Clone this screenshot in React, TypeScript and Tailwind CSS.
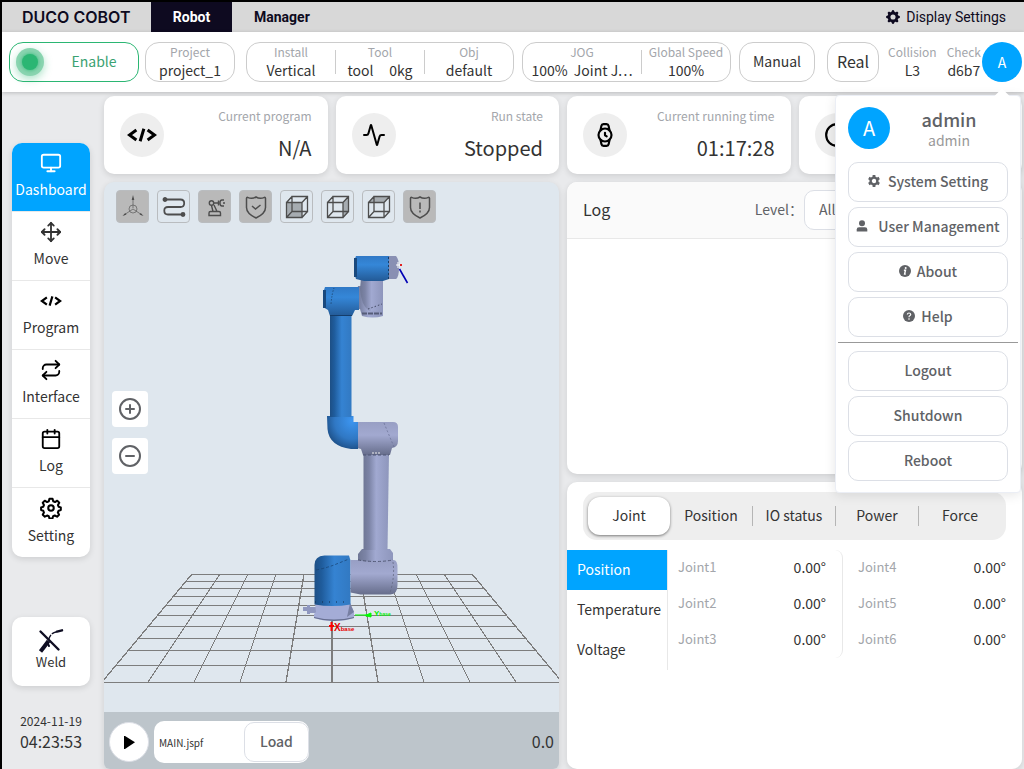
import type { ReactNode } from "react";
import clsx from "clsx";
import {
    Activity,
    Calendar,
    CircleMinus,
    CirclePlus,
    Clock,
    Monitor,
    Move,
    Repeat,
    Watch,
} from "lucide-react";
import { BsFillGearFill } from "react-icons/bs";

const CodeIcon = ({ size = 24 }: { size?: number }) => (
    <svg width={size} height={size} viewBox="0 0 24 24" fill="none" stroke="#000" strokeWidth="2.400">
        <path d="M7.500 8 2 12l5.500 4M16.500 8l5.500 4-5.500 4M13.500 7l-3 10" />
    </svg>
);

const GearIcon = () => (
    <svg width="12" height="12" viewBox="0 0 12 12" fill="none" stroke="#606266">
        <circle cx="6" cy="6" r="3.400" strokeWidth="2.400" />
        <path
            d="M6 0v2M6 10v2M.8 3l1.800 1M9.400 8l1.800 1M.8 9l1.800-1M9.400 4l1.800-1"
            strokeWidth="2.800"
        />
    </svg>
);

const UserIcon = () => (
    <svg width="12" height="12" viewBox="0 0 12 12" fill="#606266">
        <circle cx="6" cy="3.300" r="3" />
        <path d="M.7 11.500V9.400Q.7 7.200 3 7.200h6q2.300 0 2.300 2.200v2.100z" />
    </svg>
);

const InfoIcon = () => (
    <svg width="12" height="12" viewBox="0 0 12 12">
        <circle cx="6" cy="6" r="6" fill="#606266" />
        <circle cx="6.700" cy="3" r="1" fill="#fff" />
        <path d="M4.900 5.200h1.600l-.9 3.900h1.200" fill="none" stroke="#fff" strokeWidth="1.400" />
    </svg>
);

const HelpIcon = () => (
    <svg width="12" height="12" viewBox="0 0 12 12">
        <circle cx="6" cy="6" r="6" fill="#606266" />
        <path d="M4.300 4.500Q4.500 3 6 3t1.700 1.400Q7.700 5.300 6.700 5.800 6 6.200 6 7.200" fill="none" stroke="#fff" strokeWidth="1.200" />
        <circle cx="6" cy="9" r=".8" fill="#fff" />
    </svg>
);

const WeldIcon = () => (
    <svg width="26" height="24" viewBox="0 0 26 24" fill="none" stroke="#0e0d22" strokeLinecap="round">
        <path d="m2.500 2.500 18 18" strokeWidth="2.400" />
        <path d="M18 3Q12.500 4 10.500 11" strokeWidth="1.400" strokeDasharray="4 2.500" />
        <path d="m19 2.600 5-1.300" strokeWidth="2.400" />
        <path d="M10.500 12 6 18l-3.500 4.500" strokeWidth="4" strokeLinecap="butt" />
        <path d="m10 15 1 2" strokeWidth="2" />
    </svg>
);

const CogIcon = () => (
    <svg width="22" height="22" viewBox="0 0 24 24" fill="none" stroke="#000" strokeWidth="2.200" strokeLinejoin="round">
        <circle cx="12" cy="12" r="3" />
        <path d="M10.300 2h3.400l.7 2.700 2 .8L18.800 4l2.200 2.300-1.400 2.500.7 1.800 2.400.7v3l-2.400.7-.8 1.900 1.300 2.400-2.200 2.200-2.500-1.300-1.800.8-.7 2.400h-3.300l-.7-2.400-1.900-.8-2.400 1.300L3 19.300l1.300-2.400-.7-1.900-2.400-.7v-3l2.400-.7.7-1.800L3 6.300 5.200 4l2.500 1.500 1.900-.8z" />
    </svg>
);

/* ---------- view toolbar icons ---------- */

const AxesIcon = () => (
    <svg width="24" height="24" viewBox="0 0 24 24" fill="none" stroke="#5a5a5a" strokeWidth=".7">
        <path d="M12 13V3M12 14 3 20M12 14l9 6" />
        <circle cx="12" cy="14" r="4" />
        <path d="m12 0-1.300 5h2.600zM1.500 21l4-1.500-1.300-1.500zM22.500 21l-4-1.500 1.300-1.500z" fill="#4d4d4d" stroke="none" />
    </svg>
);

const PathIcon = () => (
    <svg width="24" height="24" viewBox="0 0 24 24" fill="none" stroke="#4d4d4d" strokeWidth="1.800">
        <path d="M3 4.500h15.500q3.700 0 3.700 3.700t-3.700 3.800H6q-3.700 0-3.700 3.700T6 19.500h15" />
        <circle cx="3" cy="4.500" r="1.500" fill="#4d4d4d" />
        <circle cx="21" cy="19.500" r="1.500" fill="#4d4d4d" />
    </svg>
);

const ArmIcon = () => (
    <svg width="24" height="24" viewBox="0 0 24 24" fill="none" stroke="#4d4d4d" strokeWidth="1.400">
        <path d="M6 20.500v-2.500q0-1.500 1.500-1.500H16q1.500 0 1.500 1.500v2.500zM8.500 10.500l1.500 6M11 10l3 6.500M10.500 8h5.500" />
        <circle cx="8.500" cy="8" r="2.200" />
        <path d="M15.500 5.500v5M21 5h-2q-2 0-2 3t2 3h2M20 8h2" />
    </svg>
);

const ShieldIcon = ({ children }: { children: ReactNode }) => (
    <svg width="24" height="24" viewBox="0 0 24 24" fill="none" stroke="#4d4d4d" strokeWidth="1.500">
        <path d="M3.500 2.300Q8 4.500 12 2q4 2.500 8.500.3 1 0 1 1v9.200q0 6-9.500 10.500-9.500-4.500-9.500-10.500V3.300q0-1 1-1z" />
        {children}
    </svg>
);

const CubeIcon = ({ face }: { face: string }) => (
    <svg width="24" height="24" viewBox="0 0 24 24" fill="none" stroke="#4d4d4d" strokeWidth="1.300">
        <path d={face} fill="#a6acb1" stroke="none" />
        <path d="M1.500 7.500h15.500v15H1.500zM7 1.500h15.500v15H7zM1.500 7.500 7 1.500M17 7.500l5.500-6M17 22.500l5.500-6M1.500 22.500l5.500-6" />
    </svg>
);

const viewTools = [
    { label: "Axes", filled: true, icon: <AxesIcon /> },
    { label: "Track", filled: false, icon: <PathIcon /> },
    { label: "Robot model", filled: true, icon: <ArmIcon /> },
    { label: "Safety planes", filled: true, icon: <ShieldIcon><path d="m8 11 3.500 3 5-4" /></ShieldIcon> },
    { label: "Front view", filled: false, icon: <CubeIcon face="M1.500 7.500h15.500v15H1.500z" /> },
    { label: "Side view", filled: false, icon: <CubeIcon face="m17 7.500 5.500-6v15l-5.500 6z" /> },
    { label: "Top view", filled: false, icon: <CubeIcon face="M1.500 7.500 7 1.500h15.500l-5.500 6z" /> },
    { label: "Collision", filled: true, icon: <ShieldIcon><path d="M12 7.500v6.500M12 15.500v2" /></ShieldIcon> },
];

const navItems = [
    { label: "Dashboard", icon: <Monitor size={22} /> },
    { label: "Move", icon: <Move size={22} /> },
    { label: "Program", icon: <CodeIcon size={22} /> },
    { label: "Interface", icon: <Repeat size={22} color="#000" /> },
    { label: "Log", icon: <Calendar size={22} color="#000" /> },
    { label: "Setting", icon: <CogIcon /> },
];

const menuItems = [
    { label: "System Setting", icon: <GearIcon />, gap: "gap-2" },
    { label: "User Management", icon: <UserIcon />, gap: "gap-2.5" },
    { label: "About", icon: <InfoIcon />, gap: "gap-1.5" },
    { label: "Help", icon: <HelpIcon />, gap: "gap-1.5" },
];

const sessionItems = ["Logout", "Shutdown", "Reboot"];
const tabs = ["Joint", "Position", "IO status", "Power", "Force"];
const metrics = ["Position", "Temperature", "Voltage"];

const joints = [
    ["Joint1", "Joint2", "Joint3"],
    ["Joint4", "Joint5", "Joint6"],
];

/* Perspective floor: columns meet the near edge every 46 units and the far one every 28 */
const floorColumns = Array.from({ length: 11 }, (_, i) => i - 5);
const floorRows = [574, 581, 588, 596, 605, 615, 626, 638, 650, 665, 682];

const Scene = () => (
    <svg className="absolute inset-0 h-full w-full" viewBox="104 182 455 530" preserveAspectRatio="xMidYMid slice">
        <defs>
            <linearGradient id="blueV">
                <stop offset="0" stopColor="#1d4f85" />
                <stop offset=".2" stopColor="#1f5c9c" />
                <stop offset=".55" stopColor="#3583d2" />
                <stop offset="1" stopColor="#3279c2" />
            </linearGradient>
            <linearGradient id="blueH" x2="0" y2="1">
                <stop offset="0" stopColor="#3079c6" />
                <stop offset=".35" stopColor="#3587d8" />
                <stop offset="1" stopColor="#235a96" />
            </linearGradient>
            <linearGradient id="grayV">
                <stop offset="0" stopColor="#6f7795" />
                <stop offset=".22" stopColor="#7c84a6" />
                <stop offset=".5" stopColor="#a1a9d1" />
                <stop offset="1" stopColor="#8e96bc" />
            </linearGradient>
            <linearGradient id="grayH" x2="0" y2="1">
                <stop offset="0" stopColor="#989fc4" />
                <stop offset=".4" stopColor="#a2a9d0" />
                <stop offset="1" stopColor="#666d8b" />
            </linearGradient>
            <radialGradient id="elbow" cx=".8" cy=".15" r="1">
                <stop offset="0" stopColor="#3c95f0" />
                <stop offset=".55" stopColor="#3078c4" />
                <stop offset="1" stopColor="#174273" />
            </radialGradient>
        </defs>

        <g stroke="#7d7d7d" strokeWidth="1.200" shapeRendering="crispEdges">
            {floorColumns.map((i) => (
                <line key={i} x1={332 + i * 28} y1="574" x2={332 + i * 46} y2="682" />
            ))}
            {floorRows.map((y) => {
                const reach = 140 + ((y - 574) / 108) * 90;
                return <line key={y} x1={332 - reach} y1={y + 0.5} x2={332 + reach} y2={y + 0.5} />;
            })}
        </g>

        {/* base */}
        <path d="M303 607h4v-2h3v2h6v6h-6v1h-3v-3h-4z" fill="#8f97bf" />
        <path d="M315 603h35l4 9v6q-8 3-20 3t-20-3v-4l2-2z" fill="#a4acd6" />
        <path d="m350 603 4 9-7 5z" fill="#777fa3" />
        <path d="M314 617q20 5 40 0v1q-20 6-40 0z" fill="#666e90" />
        <path d="M314.500 565q0-9 10-9.500h24.500l1.500 5v44q-18 3-36 0z" fill="url(#blueV)" />
        <path d="M316 570q10-2 18-5l15-6" fill="none" stroke="#17416f" strokeWidth=".7" strokeDasharray="3 2" />
        <path d="M315 602h35" stroke="#152b47" strokeDasharray="1 6" />

        {/* shoulder and lower link */}
        <path d="M350.500 560h43q4 0 4 8v17q0 9-7 9.500h-30l-10-2z" fill="url(#grayH)" />
        <path d="M393 562q2 15-3 31" fill="none" stroke="#5b617a" strokeDasharray="2 2" strokeWidth=".7" />
        <path d="M362 549h28l3 4v7q-17 4-35 0v-6z" fill="url(#grayV)" />
        <path d="M358 560q18 3 35 0" fill="none" stroke="#434963" strokeWidth=".8" strokeDasharray="3 2" />
        <path d="M363.500 452h25.500l-1.500 98h-24z" fill="url(#grayV)" />

        {/* elbow */}
        <path d="M357 422h36q5 0 5 5v14q0 6-6 7l-2 7h-27l-2-6-4-1z" fill="url(#grayH)" />
        <path d="M384 423q5 12 10 24" fill="none" stroke="#656d90" strokeDasharray="2 2" strokeWidth=".7" />
        <path d="M363 455h26" stroke="#4f5775" strokeDasharray="3 2" />
        <path d="M372 453h8" stroke="#eee" strokeDasharray="2 1" />
        <path d="M327 416h26.500v6h4.500v27h-7Q329 446 327.500 429z" fill="url(#elbow)" />

        {/* upper link */}
        <path d="M330 314h21.500v103H330z" fill="url(#blueV)" />
        <path d="M358 286h25v30q-10 3-21 0l-2-7h-6z" fill="url(#grayV)" />
        <path d="M325 287h34v23h-4l-3 6h-22l-2-6-5-3v-14z" fill="url(#blueH)" />
        <path d="M323 290h3v18h-3z" fill="#1a497d" />
        <path d="M330 315.500h22" stroke="#143a64" strokeWidth=".9" />
        <path d="M334 288q-2 5-3 16" fill="none" stroke="#183a60" strokeDasharray="1 2" />

        {/* wrist */}
        <path d="M361 278h22v33h-14q-8-6-9-22z" fill="url(#grayV)" />
        <path d="m368 309 14-5" stroke="#30364d" strokeWidth=".8" strokeDasharray="1.500 2" />
        <path d="M362 313.500h20" stroke="#565d79" strokeWidth="2" strokeDasharray="5 1" />
        <path d="M389 256h7q3 3 3 12t-3 11h-7z" fill="#8990b3" />
        <path d="M356 256h33v23l-6 2h-19l-8-2q-2-5-2-12t2-11z" fill="url(#blueH)" />
        <path d="M354 258h3v19h-3z" fill="#1a497d" />
        <path d="M388.500 257v22" stroke="#173c66" strokeDasharray="2 2" />
        <path d="M396 265h4M398 262v6" stroke="#fff" />
        <path d="M400 264h2v2h-2z" fill="#e02020" />
        <path d="m399.500 269 8 14" stroke="#0000b4" strokeWidth="1.600" />

        {/* base frame markers */}
        <path d="M331.500 622v9M329 626h5" stroke="#f00" strokeWidth="2" />
        <text x="334" y="631" className="fill-[#e80000] font-['Liberation_Sans'] text-[10px] font-bold">
            X<tspan className="text-[6px]">base</tspan>
        </text>
        <path d="M355 615h12" stroke="#0f0" />
        <path d="M365 615.500 371 613v4z" fill="#0f0" stroke="#0f0" />
        <text x="374" y="616" className="fill-[#00f000] font-['Liberation_Sans'] text-[8px] font-bold">
            Y<tspan className="text-[5px]">base</tspan>
        </text>
    </svg>
);

const Stat = ({ label, value, className }: { label: string; value: string; className?: string }) => (
    <div className={clsx("flex flex-col items-center pb-0.5 whitespace-nowrap", className)}>
        <span className="text-xs leading-[18px] text-[#a3a6ab]">{label}</span>
        <span className="text-sm leading-[18px] whitespace-pre text-[#333]">{value}</span>
    </div>
);

const StatusCard = ({ icon, label, value }: { icon: ReactNode; label?: string; value?: string }) => (
    <div className="flex h-[78px] items-center justify-between rounded-[10px] bg-white px-4 shadow-[0_2px_6px_rgba(0,0,0,0.12)]">
        <div className="flex h-11 w-11 shrink-0 items-center justify-center rounded-full bg-[#eee] text-black">
            {icon}
        </div>
        <div className="flex flex-col items-end gap-1.5 whitespace-nowrap">
            <span className="text-xs leading-5 text-[#a3a6ab]">{label}</span>
            <span className="text-xl leading-8 text-[#333]">{value}</span>
        </div>
    </div>
);

const UserMenu = () => (
    <div className="absolute top-[53px] right-px z-20 w-[186px] rounded border border-[#ebeef5] bg-white shadow-[0_2px_12px_rgba(0,0,0,0.1)]">
        <div className="absolute -top-[5px] right-3 h-3 w-3 rotate-45 bg-white" />
        <div className="relative px-3 py-[11px] text-[#606266]">
            <div className="flex h-[43px] items-start">
                <div className="flex h-[42px] w-[42px] shrink-0 items-center justify-center rounded-full bg-[#00a4ff] text-xl text-white">
                    A
                </div>
                <div className="flex grow flex-col items-center">
                    <span className="text-lg leading-6 font-medium">admin</span>
                    <span className="text-sm leading-[18px] text-[#999]">admin</span>
                </div>
            </div>
            <div className="mt-3 flex flex-col gap-[5px]">
                {menuItems.map((item) => (
                    <button
                        key={item.label}
                        className={clsx(
                            "flex h-10 w-[160px] items-center justify-center rounded-[10px] border border-[#dcdfe6] bg-white pb-0.5 text-sm font-medium whitespace-nowrap",
                            item.gap,
                        )}
                    >
                        {item.icon}
                        {item.label}
                    </button>
                ))}
            </div>
            <hr className="-mx-[10px] mt-[5px] mb-2 border-[#999]" />
            <div className="flex flex-col gap-[5px]">
                {sessionItems.map((label) => (
                    <button
                        key={label}
                        className="h-10 w-[160px] rounded-[10px] border border-[#dcdfe6] bg-white pb-0.5 text-sm font-medium"
                    >
                        {label}
                    </button>
                ))}
            </div>
        </div>
    </div>
);

const TopBar = () => (
    <header className="flex h-[30px] items-center bg-[#d8d8d8] pl-5 font-['Roboto',sans-serif] text-sm text-[#0e0a20]">
        <span className="w-[129px] font-['Inter',sans-serif] text-base leading-7 font-semibold whitespace-nowrap">
            DUCO COBOT
        </span>
        <a href="#robot" className="flex h-full w-[81px] items-center justify-center bg-[#0e0a20] font-bold text-white">
            Robot
        </a>
        <a href="#manager" className="px-[22px] font-bold">
            Manager
        </a>
        <button className="mr-[18px] ml-auto flex items-center gap-1.5">
            <BsFillGearFill size={14} />
            Display Settings
        </button>
    </header>
);

const Toolbar = () => (
    <div className="relative z-10 flex h-[60px] items-center bg-white pr-0.5 pl-[7px] shadow-[0_1px_4px_rgba(0,0,0,0.2)]">
        <button className="flex h-10 w-[130px] items-center rounded-[14px] border border-[#2bb673] pl-1.5 text-[#3ba272]">
            <span className="flex h-7 w-7 items-center justify-center rounded-full bg-[#8ad4b0] shadow-[0_3px_8px_rgba(43,182,115,0.4)]">
                <span className="h-4 w-4 rounded-full bg-[#2bb673] shadow-[0_0_4px_#2bb673]" />
            </span>
            <span className="grow pb-0.5 pl-1.5 text-center text-sm">Enable</span>
        </button>
        <Stat label="Project" value="project_1" className="ml-1.5 h-10 w-[90px] justify-center rounded-[14px] border border-[#ccc]" />
        <div className="ml-[11px] flex h-10 w-[268px] items-center rounded-[14px] border border-[#ccc]">
            <Stat label="Install" value="Vertical" className="flex-1" />
            <div className="h-6 w-px bg-[#ccc]" />
            <Stat label="Tool" value="tool     0kg" className="flex-1" />
            <div className="h-6 w-px bg-[#ccc]" />
            <Stat label="Obj" value="default" className="flex-1" />
        </div>
        <div className="ml-2 flex h-10 w-[209px] items-center rounded-[14px] border border-[#ccc]">
            <Stat label="JOG" value="100%  Joint J…" className="w-[118px]" />
            <div className="h-6 w-px bg-[#ccc]" />
            <Stat label="Global Speed" value="100%" className="flex-1" />
        </div>
        <button className="ml-2 h-10 w-[76px] rounded-[14px] border border-[#ccc] pb-0.5 text-sm">Manual</button>
        <button className="ml-3 h-10 w-[52px] rounded-[14px] border border-[#ccc] pb-0.5 text-base">Real</button>
        <Stat label="Collision" value="L3" className="ml-auto" />
        <Stat label="Check" value="d6b7" className="ml-2.5" />
        <div className="relative ml-px">
            <button className="h-10 w-10 rounded-full bg-[#00a4ff] text-sm text-white">A</button>
            <UserMenu />
        </div>
    </div>
);

const Sidebar = () => (
    <aside className="flex w-[102px] shrink-0 flex-col pt-[51px] pr-[14px] pl-[10px]">
        <nav className="flex flex-col divide-y divide-[#e8e8e8] overflow-hidden rounded-[10px] bg-white shadow-[0_2px_6px_rgba(0,0,0,0.12)]">
            {navItems.map((item, i) => (
                <a
                    key={item.label}
                    href={`#${item.label.toLowerCase()}`}
                    className={clsx(
                        "flex h-[69px] flex-col items-center justify-between pt-2 pb-3 text-sm leading-5",
                        i === 0 ? "bg-[#00a4ff] text-white" : "text-[#333]",
                    )}
                >
                    <span className="flex h-6 items-center">{item.icon}</span>
                    {item.label}
                </a>
            ))}
        </nav>
        <button className="mt-[60px] flex h-[69px] flex-col items-center justify-center rounded-[10px] bg-white pb-1 text-[13px] leading-[18px] text-[#333] shadow-[0_2px_6px_rgba(0,0,0,0.12)]">
            <WeldIcon />
            Weld
        </button>
        <div className="mt-[25px] text-center whitespace-nowrap text-[#333]">
            <div className="text-xs leading-5">2024-11-19</div>
            <div className="text-base leading-5">04:23:53</div>
        </div>
    </aside>
);

const ModelPanel = () => (
    <section className="flex flex-col overflow-hidden rounded-t-[10px] rounded-b-md bg-[#dfe7ee] shadow-[0_2px_6px_rgba(0,0,0,0.12)]">
        <div className="relative min-h-[530px] grow">
            <Scene />
            <div className="absolute top-2 left-3 flex gap-2">
                {viewTools.map((tool) => (
                    <button
                        key={tool.label}
                        aria-label={tool.label}
                        className={clsx(
                            "flex h-[33px] w-[33px] items-center justify-center rounded border border-[#b9bcbf]",
                            tool.filled && "bg-[#b9b9b9]",
                        )}
                    >
                        {tool.icon}
                    </button>
                ))}
            </div>
            <div className="absolute top-[209px] left-2 flex flex-col gap-[11px] text-[#606266]">
                <button aria-label="Zoom in" className="flex h-9 w-9 items-center justify-center rounded bg-white">
                    <CirclePlus size={24} />
                </button>
                <button aria-label="Zoom out" className="flex h-9 w-9 items-center justify-center rounded bg-white">
                    <CircleMinus size={24} />
                </button>
            </div>
        </div>
        <div className="flex h-[57px] items-center bg-[#bdc5cb] px-[5px] pt-[3px]">
            <button
                aria-label="Run"
                className="flex h-10 w-10 items-center justify-center rounded-full border border-[#dcdfe6] bg-white"
            >
                <svg width="12" height="13" viewBox="0 0 12 13">
                    <path d="M1 0h1l10 6.200L2 13H1z" />
                </svg>
            </button>
            <div className="ml-[5px] flex h-[42px] w-[155px] items-center rounded-[10px] bg-white">
                <span className="grow pl-[5px] text-[10px]">MAIN.jspf</span>
                <button className="h-10 w-[65px] rounded-[10px] border border-[#dcdfe6] pb-0.5 text-sm font-medium text-[#606266]">
                    Load
                </button>
            </div>
            <span className="ml-auto pb-0.5 text-base text-[#333]">0.0</span>
        </div>
    </section>
);

const LogPanel = () => (
    <section className="h-[292px] overflow-hidden rounded-[10px] bg-white shadow-[0_2px_6px_rgba(0,0,0,0.12)]">
        <div className="flex h-[57px] items-center border-b border-[#e8e8e8] bg-[#fafafa] px-4">
            <h2 className="pb-0.5 text-base">Log</h2>
            <label htmlFor="level" className="mr-px ml-auto pb-0.5 text-sm text-[#606266]">
                Level：
            </label>
            <select
                id="level"
                className="h-10 w-[202px] appearance-none rounded-[10px] border border-[#dcdfe6] bg-white px-3.5 pb-0.5 text-sm text-[#606266]"
            >
                <option>All</option>
            </select>
        </div>
    </section>
);

const JointPanel = () => (
    <section className="grow rounded-[10px] bg-white pt-2.5 shadow-[0_2px_6px_rgba(0,0,0,0.12)]">
        <div role="tablist" className="mx-4 flex h-12 items-center rounded-[14px] bg-[#eee] px-[5px]">
            {tabs.map((tab, i) => (
                <button
                    key={tab}
                    role="tab"
                    aria-selected={i === 0}
                    className={clsx(
                        "flex-1 pb-0.5 text-sm leading-[18px] whitespace-nowrap text-[#333]",
                        i === 0 && "h-[38px] rounded-xl bg-white shadow-[0_1px_3px_rgba(0,0,0,0.5)]",
                        i > 0 && "h-5",
                        i > 1 && "border-l border-[#b5b5b5]",
                    )}
                >
                    {tab}
                </button>
            ))}
        </div>
        <div className="mt-2.5 flex">
            <div className="flex w-[101px] shrink-0 flex-col border-r border-[#e8e8e8]">
                {metrics.map((metric, i) => (
                    <button
                        key={metric}
                        className={clsx(
                            "h-10 pb-0.5 pl-2.5 text-left text-sm",
                            i === 0 ? "bg-[#00a4ff] text-white" : "text-[#333]",
                        )}
                    >
                        {metric}
                    </button>
                ))}
            </div>
            <div className="grid grow grid-cols-2 self-start pr-1">
                {joints.map((column, i) => (
                    <dl
                        key={column[0]}
                        className={clsx(i === 0 ? "rounded-lg border-r border-[#e8e8e8] pr-4 pl-2.5" : "pr-3 pl-[15px]")}
                    >
                        {column.map((joint) => (
                            <div key={joint} className="flex h-9 items-center justify-between pb-0.5">
                                <dt className="text-[13px] text-[#a3a6ab]">{joint}</dt>
                                <dd className="text-sm text-[#333]">0.00°</dd>
                            </div>
                        ))}
                    </dl>
                ))}
            </div>
        </div>
    </section>
);

const App = () => {
    return (
        <div className="flex min-h-screen flex-col border-t-2 border-l-2 border-black bg-[#e9eaec] font-['Noto_Sans_CJK_SC',sans-serif] text-[#333]">
            <TopBar />
            <Toolbar />
            <div className="flex grow pr-0.5">
                <Sidebar />
                <main className="flex min-w-0 grow flex-col gap-2 pt-1">
                    <div className="grid grid-cols-4 gap-2">
                        <StatusCard icon={<CodeIcon size={30} />} label="Current program" value="N/A" />
                        <StatusCard icon={<Activity size={24} />} label="Run state" value="Stopped" />
                        <StatusCard icon={<Watch size={26} />} label="Current running time" value="01:17:28" />
                        <StatusCard icon={<Clock size={26} />} />
                    </div>
                    <div className="grid grow grid-cols-2 gap-2">
                        <ModelPanel />
                        <div className="flex flex-col gap-2">
                            <LogPanel />
                            <JointPanel />
                        </div>
                    </div>
                </main>
            </div>
        </div>
    );
};

export default App;
